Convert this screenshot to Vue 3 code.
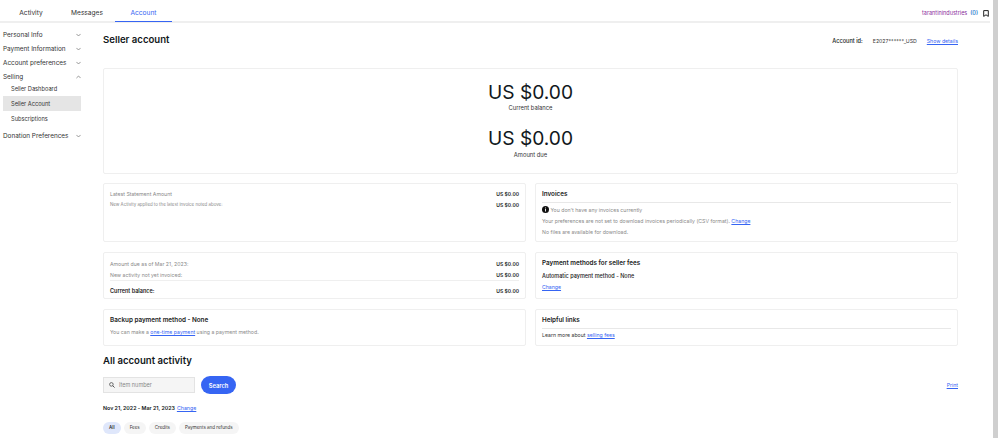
<script setup>
const sideMenu = [
  { label: 'Personal Info' },
  { label: 'Payment Information' },
  { label: 'Account preferences' },
  {
    label: 'Selling',
    open: true,
    children: [
      { label: 'Seller Dashboard' },
      { label: 'Seller Account', active: true },
      { label: 'Subscriptions' },
    ],
  },
  { label: 'Donation Preferences' },
]

const filters = ['All', 'Fees', 'Credits', 'Payments and refunds']
</script>

<template>
  <div class="page">
    <div class="main">
      <header class="topbar">
        <nav class="tabs">
          <a class="tab tab-activity">Activity</a>
          <a class="tab tab-messages">Messages</a>
          <a class="tab tab-account active">Account</a>
        </nav>
        <div class="user">
          <span class="username">tarantinindustries</span>
          <span class="count">(0)</span>
          <svg class="bookmark" width="6" height="7" viewBox="0 0 6 7">
            <path d="M.7.6h4.600v5.800L3 4.800.7 6.400z" fill="none" stroke="#222" stroke-width="1" />
          </svg>
        </div>
      </header>

      <div class="body">
        <aside class="sidebar">
          <div v-for="item in sideMenu" :key="item.label" class="side-group">
            <div class="side-item">
              <span>{{ item.label }}</span>
              <svg class="chev" width="5" height="4" viewBox="0 0 6 4">
                <path :d="item.open ? 'M.5 3.300 3 .8l2.500 2.500' : 'M.5.7 3 3.200 5.500.7'" fill="none" stroke="#666" stroke-width=".8" />
              </svg>
            </div>
            <div v-if="item.children" class="side-children">
              <a
                v-for="child in item.children"
                :key="child.label"
                class="side-child"
                :class="{ active: child.active }"
              >{{ child.label }}</a>
            </div>
          </div>
        </aside>

        <main class="content">
          <div class="head-row">
            <h1>Seller account</h1>
            <div class="account-id">
              <b>Account id:</b>
              <span class="id-value">E2027******_USD</span>
              <a class="link">Show details</a>
            </div>
          </div>

          <section class="card balance-card">
            <div class="big">US $0.00</div>
            <div class="big-label">Current balance</div>
            <div class="big second">US $0.00</div>
            <div class="big-label last">Amount due</div>
          </section>

          <div class="grid">
            <section class="card statement">
              <div class="row">
                <span class="muted">Latest Statement Amount</span>
                <b>US $0.00</b>
              </div>
              <div class="row">
                <span class="muted tiny">New Activity applied to the latest invoice noted above:</span>
                <b>US $0.00</b>
              </div>
            </section>

            <section class="card invoices">
              <h3 class="ruled">Invoices</h3>
              <p class="muted line">
                <svg class="info" width="7" height="7" viewBox="0 0 7 7">
                  <circle cx="3.500" cy="3.500" r="3.500" fill="#111" />
                  <rect x="3.100" y="3" width=".9" height="2.500" fill="#fff" />
                  <rect x="3.100" y="1.500" width=".9" height=".9" fill="#fff" />
                </svg>
                You don't have any invoices currently
              </p>
              <p class="muted line">Your preferences are not set to download invoices periodically (CSV format). <a class="link">Change</a></p>
              <p class="muted line">No files are available for download.</p>
            </section>

            <section class="card due">
              <div class="row">
                <span class="muted">Amount due as of Mar 21, 2023:</span>
                <b>US $0.00</b>
              </div>
              <div class="row">
                <span class="muted">New activity not yet invoiced:</span>
                <b>US $0.00</b>
              </div>
              <div class="row total">
                <b>Current balance:</b>
                <b>US $0.00</b>
              </div>
            </section>

            <section class="card methods">
              <h3>Payment methods for seller fees</h3>
              <p class="line auto">Automatic payment method - None</p>
              <p class="line"><a class="link">Change</a></p>
            </section>

            <section class="card backup">
              <h3>Backup payment method - None</h3>
              <p class="muted line">You can make a <a class="link">one-time payment</a> using a payment method.</p>
            </section>

            <section class="card helpful">
              <h3 class="ruled">Helpful links</h3>
              <p class="line dark">Learn more about <a class="link">selling fees</a></p>
            </section>
          </div>

          <h2>All account activity</h2>

          <div class="search-row">
            <div class="search-box">
              <svg width="6" height="6" viewBox="0 0 8 8">
                <circle cx="3.200" cy="3.200" r="2.400" fill="none" stroke="#444" stroke-width="1" />
                <path d="M5 5l2.400 2.400" stroke="#444" stroke-width="1.200" />
              </svg>
              <span>Item number</span>
            </div>
            <button class="search-btn">Search</button>
            <a class="link print">Print</a>
          </div>

          <div class="range">
            <b>Nov 21, 2022 - Mar 21, 2023</b>
            <a class="link">Change</a>
          </div>

          <div class="filters">
            <span
              v-for="(f, i) in filters"
              :key="f"
              class="pill"
              :class="{ selected: i === 0 }"
            >{{ f }}</span>
          </div>
        </main>
      </div>
    </div>
    <div class="scrollbar"></div>
  </div>
</template>

<style>
html,
body {
  margin: 0;
  overflow: hidden;
  background: #fff;
}
</style>

<style scoped>
.page {
  width: 998px;
  height: 438px;
  display: flex;
  overflow: hidden;
  font-family: Inter, "Liberation Sans", sans-serif;
  color: #111820;
  background: #fff;
}

.main {
  width: 990px;
  flex-shrink: 0;
}

.scrollbar {
  width: 5px;
  margin-left: 3px;
  background: #cfcfcf;
}

/* top tabs */
.topbar {
  height: 21px;
  border-bottom: 2px solid #efefef;
  display: flex;
  justify-content: space-between;
  align-items: center;
}

.tabs {
  display: flex;
  height: 23px;
}

.tab {
  font-size: 6.600px;
  line-height: 29px;
  text-align: center;
  color: #333;
  box-sizing: border-box;
}

.tab-activity {
  width: 62px;
}

.tab-messages {
  width: 50px;
  margin-right: 3px;
}

.tab-account {
  width: 57px;
}

.tab.active {
  color: #3665f3;
  border-bottom: 1px solid #3665f3;
}

.user {
  display: flex;
  align-items: center;
  font-size: 5.500px;
  padding-top: 5px;
}

.username {
  color: #8b2d9b;
}

.count {
  color: #2f7fd0;
  margin-left: 3px;
  font-weight: 600;
}

.bookmark {
  margin-left: 5px;
  margin-right: 1px;
}

.body {
  display: flex;
}

/* sidebar */
.sidebar {
  width: 78px;
  margin-left: 3px;
  padding-top: 5px;
  flex-shrink: 0;
}

.side-item {
  height: 14px;
  display: flex;
  align-items: center;
  justify-content: space-between;
  font-size: 6.400px;
  color: #333;
  white-space: nowrap;
}

.chev {
  flex-shrink: 0;
}

.side-children {
  display: flex;
  flex-direction: column;
  margin-top: -3px;
  margin-bottom: 3px;
}

.side-child {
  height: 15px;
  line-height: 15px;
  font-size: 5.700px;
  padding-left: 8px;
  color: #333;
}

.side-child.active {
  background: #e5e5e5;
}

/* content */
.content {
  flex: 1;
  margin-left: 22px;
  min-width: 0;
  margin-right: 32px;
}

.head-row {
  height: 45px;
  display: flex;
  justify-content: space-between;
}

h1 {
  margin: 10px 0 0;
  font-size: 9.600px;
  line-height: 14px;
  font-weight: 600;
}

.account-id {
  display: flex;
  font-size: 5.200px;
  padding-top: 14px;
  line-height: 8px;
}

.account-id b {
  font-size: 5.600px;
  font-weight: 500;
}

.id-value {
  margin-left: 10px;
  color: #333;
}

.account-id .link {
  margin-left: 10px;
}

.link {
  color: #3665f3;
  text-decoration: underline;
}

.card {
  border: 1px solid #efefef;
  border-radius: 2px;
  box-sizing: border-box;
  background: #fff;
  font-size: 5.200px;
}

.balance-card {
  height: 106px;
  text-align: center;
  padding-top: 10px;
  margin-bottom: 9px;
}

.big {
  font-size: 19.200px;
  line-height: 26px;
  font-weight: 400;
}

.big-label {
  font-size: 5.800px;
  line-height: 9px;
  margin-top: -2px;
  color: #333;
}

.big-label.last {
  margin-top: -1px;
}

.big.second {
  margin-top: 13px;
}

.grid {
  display: grid;
  grid-template-columns: 423px 423px;
  grid-template-rows: 59px 47px 37px;
  column-gap: 9px;
  row-gap: 10px;
}

.statement,
.invoices,
.due,
.methods,
.backup,
.helpful {
  padding: 6px 6px 0;
}

.statement {
  padding-top: 4px;
}

.row {
  display: flex;
  justify-content: space-between;
  align-items: center;
  height: 11px;
}

.row b {
  font-weight: 600;
  font-size: 5px;
  color: #222;
}

.muted {
  color: #8a8a8a;
}

.tiny {
  font-size: 4.400px;
}

.due {
  padding-top: 5px;
}

.total {
  border-top: 1px solid #efefef;
  padding-top: 3px;
  height: 13px;
}

.total b:first-child {
  font-size: 5.500px;
}

h3 {
  margin: 0;
  font-size: 6.300px;
  line-height: 9px;
  font-weight: 600;
  color: #222;
}

h3.ruled {
  border-bottom: 1px solid #e8e8e8;
  padding-bottom: 3px;
  margin-bottom: 2px;
}

.helpful h3.ruled {
  margin-bottom: 1px;
}

.line {
  margin: 0;
  line-height: 11px;
}

.methods h3 {
  margin-bottom: 3px;
}

.backup h3 {
  margin-bottom: 2px;
}

.auto {
  font-size: 5.500px;
  font-weight: 500;
  color: #222;
}

.dark {
  color: #333;
}

.info {
  vertical-align: -0.5px;
}

h2 {
  margin: 8px 0 0;
  font-size: 9.600px;
  line-height: 14px;
  font-weight: 600;
}

.search-row {
  display: flex;
  align-items: center;
  margin-top: 8px;
}

.search-box {
  width: 92px;
  height: 16px;
  box-sizing: border-box;
  background: #f5f5f5;
  border: 1px solid #e3e3e3;
  display: flex;
  align-items: center;
  gap: 4px;
  padding-left: 5px;
  font-size: 5.500px;
  color: #888;
}

.search-btn {
  width: 35px;
  height: 18px;
  margin-left: 6px;
  border: none;
  border-radius: 9px;
  background: #3665f3;
  color: #fff;
  font: 600 5.800px Inter, "Liberation Sans", sans-serif;
  padding: 0;
}

.print {
  margin-left: auto;
  font-size: 5.200px;
}

.range {
  margin-top: 10px;
  display: flex;
  gap: 2px;
  font-size: 5.300px;
  line-height: 9px;
}

.range b {
  font-weight: 600;
}

.filters {
  display: flex;
  gap: 3px;
  margin-top: 9px;
}

.pill {
  height: 12px;
  line-height: 12px;
  padding: 0 6px;
  border-radius: 6px;
  background: #f5f5f5;
  font-size: 4.500px;
  color: #333;
}

.pill.selected {
  background: #dfe7fb;
  font-weight: 600;
}
</style>
